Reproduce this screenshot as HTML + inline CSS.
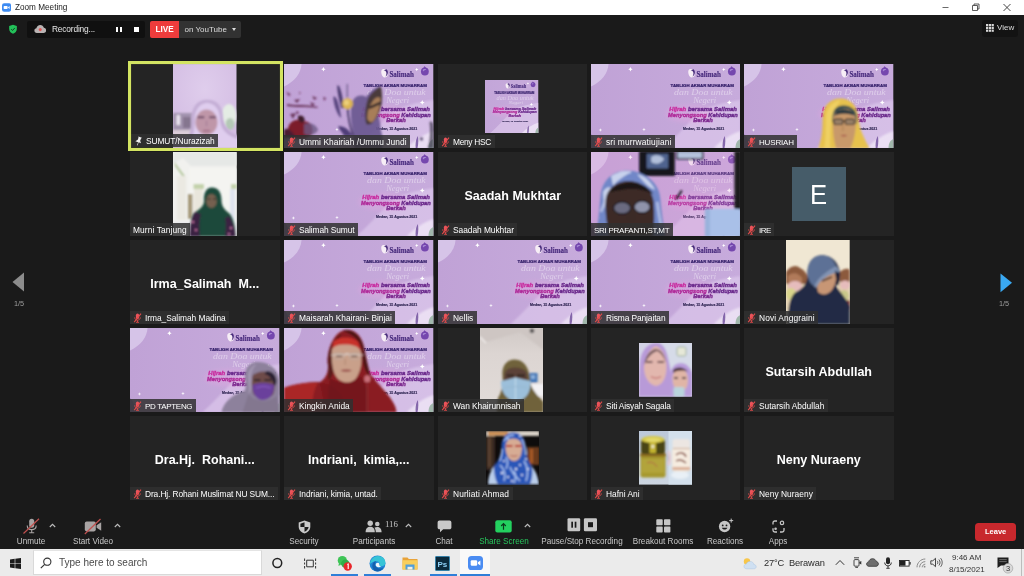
<!DOCTYPE html>
<html><head><meta charset="utf-8"><title>Zoom Meeting</title>
<style>
*{margin:0;padding:0;box-sizing:border-box}
html,body{width:1024px;height:576px;overflow:hidden;background:#1a1a1a;font-family:"Liberation Sans",sans-serif;}
.abs{position:absolute}
.lab,.big,.tb,.txt,#titlebar .t,#taskbar div,div.abs{will-change:transform}
#titlebar{position:absolute;left:0;top:0;width:1024px;height:15.4px;background:#fff}
#titlebar .t{position:absolute;left:15px;top:2px;font-size:8.2px;color:#222;line-height:11px;white-space:nowrap}
.tile{position:absolute;width:149.5px;height:84.4px;background:#242424;overflow:hidden}
.tile svg.full{position:absolute;left:0;top:0;width:100%;height:100%}
.lab{position:absolute;left:0;bottom:0;height:13.1px;background:rgba(48,48,48,.85);color:#fff;font-size:8.4px;line-height:13.1px;white-space:nowrap;padding:1px 3.5px 0 15px;letter-spacing:-.29px}
.lab.nomic{padding-left:3px}
.lab svg{position:absolute;left:2.5px;top:2px;width:9px;height:10px}
.big{position:absolute;left:0;top:0;width:100%;height:100%;display:flex;align-items:center;justify-content:center;color:#fff;font-weight:700;font-size:12.5px;white-space:pre;padding-top:2.8px}
.tb{position:absolute;color:#c8c8c8;font-size:8.15px;line-height:10px;white-space:nowrap;transform:translateX(-50%);top:536.5px}
#taskbar{position:absolute;left:0;top:549px;width:1024px;height:27px;background:#ebebeb}
</style></head><body>
<svg width="0" height="0" style="position:absolute">
<defs>
<filter id="b1" x="-10%" y="-10%" width="120%" height="120%"><feGaussianBlur stdDeviation="0.8"/></filter>
<filter id="b2" x="-10%" y="-10%" width="120%" height="120%"><feGaussianBlur stdDeviation="1.2"/></filter>
<filter id="b3" x="-20%" y="-20%" width="140%" height="140%"><feGaussianBlur stdDeviation="2.2"/></filter>
<filter id="bt" x="-5%" y="-20%" width="110%" height="140%"><feGaussianBlur stdDeviation="0.35"/></filter>
<linearGradient id="slbg" x1="0" y1="0" x2="1" y2="0"><stop offset="0" stop-color="#c0a2d6"/><stop offset="1" stop-color="#c7abdc"/></linearGradient>
<path id="star" d="M0-2.2 Q0.25-0.25 2.2 0 Q0.25 0.25 0 2.2 Q-0.25 0.25-2.2 0 Q-0.25-0.25 0-2.2Z" fill="#fff"/>
<symbol id="slide" viewBox="0 0 149 84.5" preserveAspectRatio="none">
  <rect width="149" height="84.5" fill="url(#slbg)"/>
  <path d="M0 0H17.5C17 9 11 17.5 0 22.5Z" fill="#d6c4e8"/>
  <path d="M72 84.500C84 74 94 62 104 52C112 44 124 40 149 36V84.500Z" fill="#dfccee" opacity=".62" filter="url(#b2)"/>
  <ellipse cx="100" cy="50" rx="26" ry="9" fill="#e9a6e2" opacity=".33" filter="url(#b3)"/>
  <path d="M122 84.500C130 76 140 70 149 67V84.500Z" fill="#f1e9f7" opacity=".75" filter="url(#b1)"/>
  <path d="M131.300 84.500C130.800 79 131.600 75 133.300 72C134.300 76 133.800 81 133 84.500Z" fill="#6b4a98" opacity=".8"/>
  <path d="M144 84.500C144 79 146 76 149 75V84.500Z" fill="#8fae9a" opacity=".8" filter="url(#bt)"/>
  <path d="M0 84.500V70C3 72 5 78 6 84.500Z" fill="#8d6bb8" opacity=".6"/>
  <g filter="url(#bt)" transform="translate(-1.2 0)">
  <use href="#star" transform="translate(40.5 5.2) scale(1)"/>
  <use href="#star" transform="translate(133.5 5.5) scale(.8)"/>
  <use href="#star" transform="translate(139 38.5) scale(1.1)"/>
  <use href="#star" transform="translate(10.6 66) scale(.8)" opacity=".85"/>
  <use href="#star" transform="translate(54 65.5) scale(.8)" opacity=".85"/>
  <ellipse cx="101.300" cy="9.200" rx="3" ry="4.300" fill="#f7eef6" transform="rotate(-15 101.300 9.200)"/>
  <path d="M100.500 6.200C103.500 6.600 104.200 10 102.200 12.600C104.800 11.400 105.800 7.400 103.400 5.200Z" fill="#4a2d7c"/>
  <text x="106.300" y="13" font-family="Liberation Serif" font-weight="700" font-size="8.600" fill="#45287a" stroke="#45287a" stroke-width=".15" textLength="24.500" lengthAdjust="spacingAndGlyphs">Salimah</text>
  <circle cx="141.600" cy="7.500" r="3.900" fill="#7446ae"/>
  <path d="M141 2.200C142.300 3 143 3.800 143 4.800L140.200 4.800C140.200 3.800 140.500 3 141 2.200Z" fill="#7446ae"/>
  <path d="M139.300 6C140.500 4.600 142.500 4.800 143.200 6.200C142 5.800 140.800 6.200 140.300 7.600Z" fill="#a98ad6"/>
  <text x="80.500" y="22.600" font-family="Liberation Sans" font-weight="700" font-size="4.200" fill="#35206a" stroke="#35206a" stroke-width=".22" textLength="63" lengthAdjust="spacingAndGlyphs">TABLIGH AKBAR MUHARRAM</text>
  <text x="84" y="30.800" font-family="Liberation Serif" font-style="italic" font-size="8" fill="#fff" opacity=".42" textLength="58.500" lengthAdjust="spacingAndGlyphs">dan Doa untuk</text>
  <text x="103" y="38.600" font-family="Liberation Serif" font-style="italic" font-size="7.500" fill="#fff" opacity=".42" textLength="23" lengthAdjust="spacingAndGlyphs">Negeri</text>
  <text x="79.300" y="47.300" font-family="Liberation Sans" font-weight="700" font-style="italic" font-size="5.500" stroke-width=".38" textLength="67.300" lengthAdjust="spacingAndGlyphs"><tspan fill="#c82ea0" stroke="#c82ea0">Hijrah</tspan><tspan fill="#6b2a8c" stroke="#6b2a8c"> bersama Salimah</tspan></text>
  <text x="78" y="52.600" font-family="Liberation Sans" font-weight="700" font-style="italic" font-size="5.500" stroke-width=".38" textLength="69.500" lengthAdjust="spacingAndGlyphs"><tspan fill="#b02c9a" stroke="#b02c9a">Menyongsong</tspan><tspan fill="#6b2a8c" stroke="#6b2a8c"> Kehidupan</tspan></text>
  <text x="103" y="58" font-family="Liberation Sans" font-weight="700" font-style="italic" font-size="5.500" fill="#7d2a8f" stroke="#7d2a8f" stroke-width=".38" textLength="19.600" lengthAdjust="spacingAndGlyphs">Berkah</text>
  <text x="93" y="66.300" font-family="Liberation Sans" font-weight="700" font-size="3" fill="#2d2350" stroke="#2d2350" stroke-width=".12" textLength="41" lengthAdjust="spacingAndGlyphs">Medan, 15 Agustus 2021</text>
  </g>
</symbol>
<symbol id="mic" viewBox="0 0 9 10">
  <rect x="2.900" y="0.600" width="3.200" height="5.400" rx="1.600" fill="#ea545c"/>
  <path d="M1.7 4.4C1.7 8 7.3 8 7.3 4.4" fill="none" stroke="#e24a4a" stroke-width=".9"/>
  <path d="M4.5 7.2V9M3 9.3H6" stroke="#e24a4a" stroke-width=".9" fill="none"/>
  <path d="M1.2 9.2L8 0.6" stroke="#e24a4a" stroke-width="1.1"/>
</symbol>
</defs></svg>
<div id="titlebar">
  <svg class="abs" style="left:1.800px;top:2.700px" width="9.200" height="9" viewBox="0 0 10 9"><rect width="10" height="9" rx="2.4" fill="#3d8bf2"/><rect x="1.8" y="2.8" width="4.3" height="3.4" rx=".8" fill="#fff"/><path d="M6.6 4.1L8.3 3V6L6.6 4.9Z" fill="#fff"/></svg>
  <div class="t">Zoom Meeting</div>
  <svg class="abs" style="left:940px;top:0" width="80" height="15" viewBox="0 0 80 15"><path d="M2.5 7.5H8.5" stroke="#444" stroke-width=".8"/><path d="M32.5 5.5H37.5V10.5H32.5Z M34 5.5V4H39V9H37.5" fill="none" stroke="#333" stroke-width=".8"/><path d="M63.5 4L70.5 11M70.5 4L63.5 11" stroke="#333" stroke-width=".9"/></svg>
</div>
<!-- top controls -->
<svg class="abs" style="left:8.300px;top:23.800px" width="10" height="10.400" viewBox="0 0 12 12"><path d="M6 .6L10.6 2.3V5.8C10.6 8.6 8.6 10.6 6 11.5C3.400 10.600 1.400 8.600 1.400 5.800V2.300Z" fill="#23c25a"/><path d="M3.900 6L5.400 7.500L8.200 4.500" fill="none" stroke="#13351f" stroke-width="1.1"/></svg>
<div class="abs" style="left:27px;top:20.900px;width:118px;height:17px;background:#101010;border-radius:2px"></div>
<svg class="abs" style="left:33.800px;top:23.700px" width="12.500" height="9.800" viewBox="0 0 14 11"><path d="M3.200 10C1.400 10 .4 8.800 .4 7.400C.4 6 1.400 5 2.700 4.900C3 2.600 4.800 1 7 1C9 1 10.600 2.300 11.100 4.200C12.600 4.400 13.600 5.600 13.600 7.100C13.600 8.700 12.400 10 10.800 10Z" fill="#b9b3b3"/><circle cx="7" cy="6.300" r="1.700" fill="#e05555"/></svg>
<div class="abs" style="left:52.300px;top:23.800px;font-size:8.400px;line-height:10px;color:#e6e6e6;white-space:nowrap;letter-spacing:-.18px">Recording...</div>
<div class="abs" style="left:116px;top:26.500px;width:2px;height:5.400px;background:#fff"></div>
<div class="abs" style="left:119.800px;top:26.500px;width:2px;height:5.400px;background:#fff"></div>
<div class="abs" style="left:134.200px;top:26.600px;width:5.400px;height:5.400px;background:#fff"></div>
<div class="abs" style="left:150px;top:21.100px;width:29px;height:16.900px;background:#ee3c3c;color:#fff;font-weight:700;font-size:8.200px;line-height:17px;text-align:center;border-radius:2px 0 0 2px">LIVE</div>
<div class="abs" style="left:179px;top:21.100px;width:62px;height:16.900px;background:#323232;color:#dcdcdc;font-size:8px;line-height:17px;padding-left:5.500px;border-radius:0 2px 2px 0;white-space:nowrap">on YouTube<span style="position:absolute;left:53px;top:7.300px;border:2px solid transparent;border-top:3px solid #ddd;width:0;height:0"></span></div>
<div class="abs" style="left:982px;top:20px;width:36px;height:16.500px;background:#131313;border-radius:3px"></div>
<svg class="abs" style="left:986px;top:24px" width="8" height="8" viewBox="0 0 8 8"><g fill="#d8d8d8"><rect x="0" y="0" width="2.200" height="2.200"/><rect x="2.800" y="0" width="2.200" height="2.200"/><rect x="5.600" y="0" width="2.200" height="2.200"/><rect x="0" y="2.800" width="2.200" height="2.200"/><rect x="2.800" y="2.800" width="2.200" height="2.200"/><rect x="5.600" y="2.800" width="2.200" height="2.200"/><rect x="0" y="5.600" width="2.200" height="2.200"/><rect x="2.800" y="5.600" width="2.200" height="2.200"/><rect x="5.600" y="5.600" width="2.200" height="2.200"/></g></svg>
<div class="abs" style="left:997px;top:23px;font-size:8px;line-height:10px;color:#dedede">View</div>
<!-- nav arrows -->
<svg class="abs" style="left:12px;top:272px" width="13" height="20" viewBox="0 0 13 20"><path d="M0.500 10L12 .5V19.500Z" fill="#8c8c8c"/></svg>
<div class="abs" style="left:13.500px;top:299px;font-size:7.300px;line-height:9px;color:#9c9c9c">1/5</div>
<svg class="abs" style="left:999.500px;top:272.500px" width="13" height="20" viewBox="0 0 13 20"><path d="M12 9.800L0.500 .5V19.200Z" fill="#3aa9f2"/></svg>
<div class="abs" style="left:998.500px;top:299px;font-size:7.300px;line-height:9px;color:#9c9c9c">1/5</div>
<div class="tile" style="left:130.4px;top:63.7px"><svg class="abs" style="left:43px;top:0" width="63.500" height="84.400" viewBox="0 0 63.500 84.400"><defs><radialGradient id="gsu" cx=".5" cy=".3" r=".75"><stop offset="0" stop-color="#dfcdec"/><stop offset="1" stop-color="#d2bbe2"/></radialGradient></defs><rect width="63.500" height="84.400" fill="url(#gsu)"/><g filter="url(#b2)"><rect x="0" y="49" width="21" height="18" fill="#a293ae"/><rect x="3.500" y="51" width="3.500" height="10" fill="#ece6f0"/><rect x="10" y="53" width="8" height="11" fill="#85768f"/><rect x="0" y="66" width="24" height="6" fill="#dccdd8"/><ellipse cx="56" cy="52" rx="7.500" ry="12" fill="#e4ece4"/><ellipse cx="57" cy="60" rx="4.500" ry="6" fill="#b4c8b6"/></g><g filter="url(#b1)" transform="translate(33.500 88.400) scale(1.120) translate(-33.500 -84.400)"><path d="M34 37.500C23 37.500 19.500 47 20 57C20 65 17 73 13 84.400H63.500V70C55 68 48.500 62 48 52C47.500 43 43 37.500 34 37.500Z" fill="#dfcdee"/><path d="M34 37.500C23 37.500 19.500 47 20 57C20 65 17 73 13 84.400H16C20 74 23 66 23 57C22.500 48 26 41 34 40C42 41 45.500 47 45.500 55C46 64 52 70 63.500 73V70C55 68 48.500 62 48 52C47.500 43 43 37.500 34 37.500Z" fill="#b9a3cc" opacity=".7"/><ellipse cx="33.500" cy="57.500" rx="9.800" ry="11.500" fill="#bf96a8"/><path d="M25.500 53H31.500M36 53H42" stroke="#6a4a66" stroke-width="1.800"/><path d="M30.500 65H36.500" stroke="#9c6480" stroke-width="1.300"/><path d="M33.500 56V61" stroke="#a8809a" stroke-width="1.200"/></g></svg><div class="lab" style="left:0.5px;bottom:0.5px;font-size:8.4px;letter-spacing:-0.08px"><svg viewBox="0 0 9 10"><path d="M2.800 .8H6.600L6 2V4.200L7.600 6.200H5.100V9.300L4.500 9.800V6.200H1.600L3.400 4.200V2Z" fill="#f0f0f0" transform="rotate(20 4.500 5)"/></svg><span>SUMUT/Nurazizah</span></div></div>
<div class="tile" style="left:284px;top:63.7px"><svg class="full" viewBox="0 0 149 84.5" preserveAspectRatio="none"><use href="#slide"/><g filter="url(#b1)"><path d="M2 28C6 29 8 31 5 32ZM10 36L16 35L13 39ZM28 32L33 34L30 36ZM39 33L42 34L40 37ZM15 28L17 29L15 30ZM26 38L31 40L28 42ZM3 40C12 42 22 40 34 43L33 44C22 42 12 44 3 42ZM6 50L12 49L9 55ZM12 47L15 48L13 51Z" fill="#5c2348" opacity=".85"/><path d="M4 64C6 56 14 54 19 58C25 56 30 62 28 70C24 76 8 76 4 72Z" fill="#7b1d2c"/><path d="M14 52C18 50 22 54 20 58C17 60 13 57 14 52Z" fill="#3d1a2c"/><path d="M0 66C4 62 10 70 12 74H0Z" fill="#4a1f33"/><path d="M20 60C26 58 32 60 34 66C30 72 24 72 20 70Z" fill="#6d5a86" opacity=".8"/><path d="M49 33C52 30 55 40 57 54C54 52 50 44 49 33Z" fill="#5a4680"/><path d="M53 22C55 18 58 30 60 44L57 44C55 36 53 28 53 22Z" fill="#4b3a70"/><path d="M54 62C60 62 66 66 68 72H60C58 68 55 66 54 62Z" fill="#4f3d78"/><path d="M67 42C68 34 74 29 82 33C85 28 90 24 96 22C99 30 98 42 94 50C96 58 96 66 98 72L98 84.500H70C70 76 68 66 67 58C66.500 52 66.500 46 67 42Z" fill="#6a5890" opacity=".92"/><path d="M84 34C88 28 93 24 96.500 22.500C99 32 98 44 93 52C90 58 86 62 82 60C80 52 81 42 84 34Z" fill="#4a3a3a"/><path d="M88 38C90 34 94 32 96 34C96 42 94 50 90 56C87 60 84 58 83 54C83 48 85 42 88 38Z" fill="#a87e58"/><path d="M85 44L96 39" stroke="#2a2228" stroke-width="2.400"/><path d="M63 20V34" stroke="#3e3060" stroke-width=".8"/><path d="M63.500 45C64 54 66 64 69 72" stroke="#3e3060" stroke-width="1.600" fill="none"/><circle cx="63.300" cy="39.700" r="5.400" fill="#dcb552"/><circle cx="62.300" cy="38.700" r="2.600" fill="#ecd07c"/><circle cx="137" cy="75" r="1.600" fill="#5a4a70"/><path d="M145 58C148 56 149 60 149 64V84.500H143C146 78 146 66 145 58Z" fill="#4a4258" opacity=".8"/></g></svg><div class="lab" style="font-size:8.4px;letter-spacing:0.04px"><svg viewBox="0 0 9 10"><use href="#mic"/></svg><span>Ummi Khairiah /Ummu Jundi</span></div></div>
<div class="tile" style="left:437.5px;top:63.7px"><svg class="abs" style="left:47.700px;top:16px" width="53.500" height="53.500" viewBox="64.500 0 84.500 84.500" preserveAspectRatio="none"><use href="#slide" width="149" height="84.500"/></svg><div class="lab" style="font-size:8.4px;letter-spacing:-0.31px"><svg viewBox="0 0 9 10"><use href="#mic"/></svg><span>Meny HSC</span></div></div>
<div class="tile" style="left:590.9px;top:63.7px"><svg class="full" viewBox="0 0 149 84.5" preserveAspectRatio="none"><use href="#slide"/></svg><div class="lab" style="font-size:8.4px;letter-spacing:0.15px"><svg viewBox="0 0 9 10"><use href="#mic"/></svg><span>sri murrwatiujiani</span></div></div>
<div class="tile" style="left:744.3px;top:63.7px"><svg class="full" viewBox="0 0 149 84.5" preserveAspectRatio="none"><use href="#slide"/><g filter="url(#b1)"><path d="M96 34.500C86 34.500 79 42 78.500 52C78 62 79 70 74 84.500H125C121 76 116 68 114.500 58C114 44 108 34.500 96 34.500Z" fill="#e6c14d"/><path d="M96 36C90 37 84 42 82 50C81 60 82 72 80 84.500H86C86 70 86 56 90 46C92 42 95 39 96 36Z" fill="#f0d36a" opacity=".8"/><path d="M90 46C94 40 104 40 110 46C113 50 113 56 112 60L88 58C88 54 88 50 90 46Z" fill="#2b4850"/><path d="M88.500 56C88.500 48 94 44.500 100 44.500C107 44.500 111.500 49 111.500 57C111.500 66 110 76 106 84.500H92C89 76 88.500 66 88.500 56Z" fill="#c8996b"/><path d="M92 47C96 44.500 104 44.500 109 48L110 52C104 49 96 49 90 52Z" fill="#2a3a40"/><rect x="89.500" y="55" width="9" height="5.600" rx="1.500" fill="#9a8068" stroke="#2c2622" stroke-width="1"/><rect x="101" y="55" width="9" height="5.600" rx="1.500" fill="#9a8068" stroke="#2c2622" stroke-width="1"/><path d="M98.500 57H101" stroke="#2c2622" stroke-width="1"/><path d="M96 71.500C98 70.500 101 70.500 103 71.500C101 73 98 73 96 71.500Z" fill="#a85a4e"/><path d="M98.500 62V67" stroke="#b08258" stroke-width="1.200"/></g></svg><div class="lab" style="font-size:8.0px;letter-spacing:-0.17px"><svg viewBox="0 0 9 10"><use href="#mic"/></svg><span>HUSRIAH</span></div></div>
<div class="tile" style="left:130.4px;top:151.8px"><svg class="abs" style="left:42.800px;top:0" width="63.700" height="84.400" viewBox="0 0 63.700 84.400"><rect width="63.700" height="84.400" fill="#f1f1ee"/><g filter="url(#b1)"><path d="M0 0H63.700V14H18L10 6L0 12Z" fill="#e6e8e6"/><path d="M16 16H63.700V70H16Z" fill="#f4f4f1"/><path d="M1.500 10L12 24V28L2 14Z" fill="#b8c9a2"/><rect x="4" y="24" width="9" height="44" fill="#ebe9e2"/><rect x="20.500" y="32" width="10.500" height="5" fill="#c3d2ab"/><rect x="58" y="32" width="5.700" height="5" fill="#c3d2ab"/><rect x="21" y="37" width="9" height="30" fill="#e9e6dc"/><rect x="15" y="42" width="4.500" height="25" fill="#a59878"/><rect x="57" y="37" width="5" height="32" fill="#dfe3ee"/><rect x="0" y="70" width="63.700" height="14.400" fill="#e9e9ec"/></g><g filter="url(#b1)"><path d="M39 35.500C32 35.500 30.500 43 31 49C31 55 25 58 20 62C17 70 17 78 17 84.400H62.500C62.500 76 61 68 57 62C52 58 48.500 55 48.500 48C48.500 41 45.500 35.500 39 35.500Z" fill="#1f4a3b"/><path d="M22 60C18 66 17 76 16.500 84.400H27C26 76 26 68 28 62Z" fill="#3a2443"/><path d="M56 64C60 70 62 78 62.500 84.400H52C53 76 53 70 52 66Z" fill="#3a2443"/><circle cx="20" cy="70" r="1.100" fill="#d77bb0"/><circle cx="23" cy="78" r="1.100" fill="#d77bb0"/><circle cx="58" cy="76" r="1.100" fill="#d77bb0"/><circle cx="56" cy="82" r="1" fill="#d77bb0"/><ellipse cx="38.500" cy="49" rx="5.300" ry="7" fill="#75604f"/><path d="M34.500 47H37.500M40 47H43" stroke="#2e2420" stroke-width="1.200"/></g></svg><div class="lab nomic" style="font-size:8.4px;letter-spacing:0.10px"><span>Murni Tanjung</span></div></div>
<div class="tile" style="left:284px;top:151.8px"><svg class="full" viewBox="0 0 149 84.5" preserveAspectRatio="none"><use href="#slide"/></svg><div class="lab" style="font-size:8.4px;letter-spacing:-0.10px"><svg viewBox="0 0 9 10"><use href="#mic"/></svg><span>Salimah Sumut</span></div></div>
<div class="tile" style="left:437.5px;top:151.8px"><div class="big">Saadah Mukhtar</div><div class="lab" style="font-size:8.4px;letter-spacing:-0.04px"><svg viewBox="0 0 9 10"><use href="#mic"/></svg><span>Saadah Mukhtar</span></div></div>
<div class="tile" style="left:590.9px;top:151.8px"><svg class="full" viewBox="0 0 149 84.500" preserveAspectRatio="none"><use href="#slide"/><rect width="149" height="84.500" fill="#e59ad6" opacity=".22"/><g filter="url(#b1)"><rect x="48" y="-1" width="35.500" height="25" fill="#14141c"/><rect x="55.500" y="2" width="21.500" height="14.500" fill="#50648f"/><path d="M60 5C64 2 70 3 73 7C70 12 64 13 60 10Z" fill="#c9d6ec" opacity=".8"/><rect x="85" y="-1" width="27" height="8.500" fill="#1c2030"/><rect x="86.500" y="0" width="24" height="6" fill="#b4c2dc"/><path d="M36 18.500C22 18.500 11 28 9.500 44C8 58 8 70 4 84.500H74C72 72 70 58 69 46C68 30 52 18.500 36 18.500Z" fill="#7187c8"/><path d="M20 24C26 20 34 19 40 20C34 24 26 28 22 34ZM46 22C54 24 60 30 64 38C58 36 52 30 46 22ZM12 40C14 36 18 34 20 36C16 42 14 50 13 58Z" fill="#d2daf0" opacity=".9"/><path d="M10 60C12 54 14 50 15 46M66 50C67 58 68 66 70 74M28 21C32 19.500 36 19.500 40 20.500" stroke="#c9d2ee" stroke-width="2.200" fill="none" opacity=".8"/><path d="M38 29C26 29 15 36 14.500 50C14 62 16 72 18 84.500H62C63 72 63.500 62 62.500 50C61.500 38 50 29 38 29Z" fill="#3d2b27"/><path d="M18 40C24 32 36 30 44 31C52 32 58 36 62 42C54 38 44 36 36 37C28 38 22 40 18 40Z" fill="#1c1516"/><ellipse cx="31" cy="56" rx="8.500" ry="6" fill="#6a6a80" stroke="#15131a" stroke-width="1.200"/><ellipse cx="51" cy="55" rx="8" ry="6" fill="#8f93aa" stroke="#15131a" stroke-width="1.200"/><path d="M36 62C38 58 42 58 44 62C46 66 44 70 40 70C36 70 34 66 36 62Z" fill="#3a2a28"/><path d="M90.500 38.500L85 47" stroke="#1a1420" stroke-width="2"/><rect x="143" y="-1" width="7" height="86" fill="#1b1b1b"/><rect x="113.500" y="57" width="36" height="28" rx="2" fill="#a9c0e8"/><rect x="113.500" y="57" width="5" height="28" fill="#9ab2dc"/></g></svg><div class="lab nomic" style="font-size:8.0px;letter-spacing:-0.26px"><span>SRI PRAFANTI,ST,MT</span></div></div>
<div class="tile" style="left:744.3px;top:151.8px"><div class="abs" style="left:47.500px;top:15.500px;width:53.500px;height:53.500px;background:#465c69;color:#fff;font-size:28.500px;line-height:55.400px;text-align:center"><span style="display:inline-block;transform:scaleX(.9)">E</span></div><div class="lab" style="font-size:8.0px;letter-spacing:-0.54px"><svg viewBox="0 0 9 10"><use href="#mic"/></svg><span>IRE</span></div></div>
<div class="tile" style="left:130.4px;top:239.9px"><div class="big">Irma_Salimah  M...</div><div class="lab" style="font-size:8.4px;letter-spacing:-0.04px"><svg viewBox="0 0 9 10"><use href="#mic"/></svg><span>Irma_Salimah Madina</span></div></div>
<div class="tile" style="left:284px;top:239.9px"><svg class="full" viewBox="0 0 149 84.5" preserveAspectRatio="none"><use href="#slide"/></svg><div class="lab" style="font-size:8.4px;letter-spacing:-0.01px"><svg viewBox="0 0 9 10"><use href="#mic"/></svg><span>Maisarah Khairani- Binjai</span></div></div>
<div class="tile" style="left:437.5px;top:239.9px"><svg class="full" viewBox="0 0 149 84.5" preserveAspectRatio="none"><use href="#slide"/></svg><div class="lab" style="font-size:8.4px;letter-spacing:-0.06px"><svg viewBox="0 0 9 10"><use href="#mic"/></svg><span>Nellis</span></div></div>
<div class="tile" style="left:590.9px;top:239.9px"><svg class="full" viewBox="0 0 149 84.5" preserveAspectRatio="none"><use href="#slide"/></svg><div class="lab" style="font-size:8.4px;letter-spacing:-0.10px"><svg viewBox="0 0 9 10"><use href="#mic"/></svg><span>Risma Panjaitan</span></div></div>
<div class="tile" style="left:744.3px;top:239.9px"><svg class="abs" style="left:42.100px;top:0" width="63.700" height="84.400" viewBox="0 0 63.700 84.400"><rect width="63.700" height="84.400" fill="#f0e7d3"/><g filter="url(#b1)"><path d="M0 32C4 26 10 24 14 28C18 30 22 34 22 40V46H0Z" fill="#8c5a3c"/><path d="M2 36C6 32 12 32 16 38V44H2Z" fill="#b07a5a"/><path d="M54 32C58 28 62 28 63.700 30V46H54Z" fill="#8c5a3c"/><rect x="0" y="44" width="22" height="26" fill="#e2cfae"/><ellipse cx="9" cy="46" rx="7" ry="5" fill="#e6bcbc"/><ellipse cx="5" cy="54" rx="5" ry="6" fill="#d8d48a"/><rect x="52" y="42" width="11.700" height="28" fill="#e2cfae"/><ellipse cx="59" cy="45" rx="5" ry="4.500" fill="#e6bcbc"/><ellipse cx="58" cy="56" rx="5" ry="6" fill="#c9c88a"/><path d="M56 62C60 62 63 66 63.700 72V60Z" fill="#7a3030"/><path d="M36 15.300C26 15.300 21 24 21.500 34C22 42 18 48 10 52C4 56 2 66 2 84.400H63.700V66C60 58 54 52 50 46C54 40 56 34 52 26C49 19 43 15.300 36 15.300Z" fill="#232b45"/><path d="M36 15.300C27 15.300 21.500 23 21.500 32C21.500 38 24 44 28 46C30 40 38 32 50 26C47 19 43 15.300 36 15.300Z" fill="#5d7196"/><path d="M28 46C30 40 38 32 50 26C52 28 53 30 53 32C42 36 34 42 30 48Z" fill="#8093b4"/><path d="M31 47C33 41 40 36 49 33C51 38 50 44 46 50C42 55 36 56 32 52Z" fill="#c79674"/><path d="M36 41L46 37" stroke="#3a2a2a" stroke-width="1.400"/><path d="M49 30C54 34 55 40 52 46C50 44 50 36 49 30Z" fill="#1a1f33"/></g></svg><div class="lab" style="font-size:8.4px;letter-spacing:0.13px"><svg viewBox="0 0 9 10"><use href="#mic"/></svg><span>Novi Anggraini</span></div></div>
<div class="tile" style="left:130.4px;top:327.9px"><svg class="full" viewBox="0 0 149 84.5" preserveAspectRatio="none"><use href="#slide"/><g filter="url(#b1)"><path d="M127 34C118 34 114 42 114.500 50C115 56 116 60 114 63C104 66 94 72 91 84.500H149V52C147 40 138 34 127 34Z" fill="#8d819c"/><path d="M127 36C121 37 117 43 117.500 50C118 56 119 62 118 66C122 64 122 56 121 50C120.500 44 123 39 127 36Z" fill="#a79bb6" opacity=".8"/><path d="M122 48C126 43 136 42 143 46C145 52 145 60 143 66C138 72 128 72 123 66C121 60 121 54 122 48Z" fill="#6e4c4a"/><path d="M136 43C141 43 145 46 146 52C146 56 145 58 144 58C142 52 140 48 134 46Z" fill="#2a2030"/><path d="M123.500 52H130M134 52H141" stroke="#1f1820" stroke-width="1.600"/><path d="M122 57C128 54.500 137 54.500 143.500 57C144 64 141 71 133 72C126 72 122 66 122 57Z" fill="#6b3f9c"/><path d="M126 60C130 58.500 136 58.500 140 60" stroke="#8a5fc0" stroke-width="1" fill="none"/><path d="M118 66C124 74 138 76 146 68L149 84.500H112Z" fill="#83778f"/></g></svg><div class="lab" style="font-size:8.0px;letter-spacing:-0.31px"><svg viewBox="0 0 9 10"><use href="#mic"/></svg><span>PD TAPTENG</span></div></div>
<div class="tile" style="left:284px;top:327.9px"><svg class="full" viewBox="0 0 149 84.5" preserveAspectRatio="none"><use href="#slide"/><g filter="url(#b1)"><path d="M0 60C10 56 24 54 36 54C42 50 44 44 44 38C42 24 48 6 60 2C70 0 78 8 80 20C82 30 84 40 86 46C92 54 100 62 106 70C110 76 112 80 112 84.500H0Z" fill="#8a1c22"/><path d="M0 60C10 56 24 54 34 55C30 60 28 70 28 84.500H0Z" fill="#aa2727"/><path d="M36 56C44 54 50 60 56 66C60 72 62 78 62 84.500H40C40 74 38 64 36 56Z" fill="#7d171c"/><path d="M46 50C52 56 70 56 76 48C80 54 84 62 84 72V84.500H44C44 72 44 60 46 50Z" fill="#6e1519" opacity=".75"/><path d="M58 3C66 0 76 6 79 18C81 28 84 40 86 48C80 44 78 34 78 24C77 14 70 6 58 3Z" fill="#4a1518"/><path d="M44 38C42 28 46 12 58 5C52 14 50 26 50 36C50 44 48 50 44 52Z" fill="#5a1a1c"/><path d="M49 14C54 8 68 8 74 14L76 22H48Z" fill="#c8302c"/><path d="M47.500 24C47.500 18 54 16.500 61 16.500C70 16.500 76.500 19 77 26C78 36 76 44 72 50C68 56 58 56 53 50C48 44 47.500 34 47.500 24Z" fill="#c9a08a"/><path d="M47 27H60C62 25.500 64 25.500 66 27H79" stroke="#ddd6d2" stroke-width="1.100" fill="none"/><rect x="49" y="25.500" width="11" height="5.500" rx="2" fill="none" stroke="#b9aaa4" stroke-width=".8"/><rect x="65" y="25.500" width="11" height="5.500" rx="2" fill="none" stroke="#b9aaa4" stroke-width=".8"/><path d="M52 28.500H58M67 28.500H73" stroke="#4a3430" stroke-width="1.200"/><path d="M56 42.500C60 41 64 41 68 42.500C64 44.500 60 44.500 56 42.500Z" fill="#a05a54"/><path d="M61 31V37" stroke="#b48a74" stroke-width="1.200"/><ellipse cx="83" cy="51" rx="3" ry="3.600" fill="#c8707a"/><path d="M83 54V84.500" stroke="#8a2a30" stroke-width="1.600"/></g></svg><div class="lab" style="font-size:8.4px;letter-spacing:0.00px"><svg viewBox="0 0 9 10"><use href="#mic"/></svg><span>Kingkin Anida</span></div></div>
<div class="tile" style="left:437.5px;top:327.9px"><svg class="abs" style="left:42.400px;top:0" width="63.600" height="84.400" viewBox="0 0 63.600 84.400"><defs><linearGradient id="gwan" x1="0" y1="0" x2="0" y2="1"><stop offset="0" stop-color="#d0c9c6"/><stop offset=".3" stop-color="#dcd5d2"/><stop offset="1" stop-color="#e2dcd9"/></linearGradient></defs><rect width="63.600" height="84.400" fill="url(#gwan)"/><g filter="url(#b1)"><path d="M0 8L6 14L40 4L63.600 22V0H0Z" fill="#cec6c3"/><path d="M0 9L6 15" stroke="#f2eeec" stroke-width="1.500"/><circle cx="52" cy="2.800" r="2.400" fill="#5a5656"/><rect x="49.500" y="45" width="8" height="9.500" fill="#3d72b4"/><rect x="51" y="47" width="4" height="4" fill="#8ab0dc"/><rect x="51" y="56" width="12.600" height="12" fill="#f3f1f4"/><path d="M34.800 31.500C26 31.500 21.500 39 22.500 48C23 56 22 64 18 70C17 76 17 80 17 84.400H63.600V74C58 68 52 62 50 54C50 40 44 31.500 34.800 31.500Z" fill="#70623a"/><path d="M25 44C28 38 42 38 46.500 44C48 48 48 52 47 55H24.500C24 52 24 48 25 44Z" fill="#5c4238"/><path d="M26.500 47.500H34M37 47.500H45" stroke="#2e2220" stroke-width="1.800"/><path d="M21 53C26 52 30 51 35.500 49.500C41 51 46 52 50.500 53C51 62 48 72 36 73.500C25 72 20.500 62 21 53Z" fill="#9cbfda"/><path d="M35.500 49.500V73" stroke="#c4dcec" stroke-width="1"/><path d="M24 60C30 58 42 58 48 60" stroke="#93b6cf" stroke-width=".8" fill="none"/></g></svg><div class="lab" style="font-size:8.4px;letter-spacing:-0.04px"><svg viewBox="0 0 9 10"><use href="#mic"/></svg><span>Wan Khairunnisah</span></div></div>
<div class="tile" style="left:590.9px;top:327.9px"><svg class="abs" style="left:48.100px;top:15.400px" width="53.200" height="53.600" viewBox="0 0 53.200 53.600"><rect width="53.200" height="53.600" fill="#d3d3e6"/><g filter="url(#b1)"><rect x="22" y="0" width="31.200" height="30" fill="#d6dbe8"/><rect x="38" y="4" width="9" height="9" rx="1.500" fill="#e6e8d8" stroke="#9fb0a0" stroke-width="1"/><path d="M18 0C8 0 2 8 1 20C0 32 0 44 0 53.600H34V40C32 30 30 16 27 8C25 3 22 0 18 0Z" fill="#b89ad8"/><path d="M17 3C10 6 6 14 5 24C5 34 10 42 17 43C24 42 27.500 34 27.500 24C27.500 14 24 6 17 3Z" fill="#e2b7ae"/><path d="M7 19H13.500M18.500 19H25" stroke="#4a3038" stroke-width="1.500"/><path d="M12 33.500C15 35.500 19 35.500 22 33.500" stroke="#c4706e" stroke-width="1.300" fill="none"/><path d="M16 6C10 8 6 14 5 22C8 16 12 10 18 8C22 10 25 14 27 20C26 12 22 6 16 6Z" fill="#4a3440" opacity=".7"/><path d="M42 20C35 20 31 26 31.500 34C32 42 32 48 30 53.600H53.200V30C51 24 47 20 42 20Z" fill="#b99ddb"/><path d="M41 26C36 26 33 31 33.500 37C34 44 37 48 42 48C47 48 49 43 49 37C49 30 46 26 41 26Z" fill="#e0b5a6"/><path d="M35 35H39M43 35H47" stroke="#3a2830" stroke-width="1.400"/><path d="M34 27C38 23 46 24 49 29C45 27 39 27 34 30Z" fill="#4a3038"/><rect x="34.500" y="44" width="11" height="9.600" rx="2" fill="#b9d4dc"/></g></svg><div class="lab" style="font-size:8.4px;letter-spacing:-0.13px"><svg viewBox="0 0 9 10"><use href="#mic"/></svg><span>Siti Aisyah Sagala</span></div></div>
<div class="tile" style="left:744.3px;top:327.9px"><div class="big">Sutarsih Abdullah</div><div class="lab" style="font-size:8.4px;letter-spacing:0.01px"><svg viewBox="0 0 9 10"><use href="#mic"/></svg><span>Sutarsih Abdullah</span></div></div>
<div class="tile" style="left:130.4px;top:416px"><div class="big">Dra.Hj.  Rohani...</div><div class="lab" style="font-size:8.4px;letter-spacing:-0.11px"><svg viewBox="0 0 9 10"><use href="#mic"/></svg><span>Dra.Hj. Rohani Muslimat NU SUM...</span></div></div>
<div class="tile" style="left:284px;top:416px"><div class="big">Indriani,  kimia,...</div><div class="lab" style="font-size:8.4px;letter-spacing:-0.03px"><svg viewBox="0 0 9 10"><use href="#mic"/></svg><span>Indriani, kimia, untad.</span></div></div>
<div class="tile" style="left:437.5px;top:416px"><svg class="abs" style="left:48.100px;top:15.400px" width="53.500" height="53.600" viewBox="0 0 53.500 53.600"><rect width="53.500" height="53.600" fill="#0e0c0c"/><g filter="url(#b1)"><rect x="0" y="0" width="53.500" height="5" fill="#d9d2c8"/><rect x="2" y="0.500" width="20" height="4" fill="#c98a4a"/><rect x="0" y="5" width="9" height="34" fill="#3a2a20"/><rect x="2" y="6" width="3" height="30" fill="#5a4030"/><rect x="41" y="16" width="12.500" height="18" fill="#6a3a1c"/><rect x="44" y="18" width="3" height="14" fill="#a85a28"/><path d="M2 53.600C2 44 6 36 12 32L42 32C48 36 52 44 53 53.600Z" fill="#b9cdea"/><path d="M27 1.500C19 1.500 15.500 8 15.500 16C15.500 24 12 30 8 36C8 44 10 50 12 53.600H44C46 48 47 42 46 36C42 30 39.500 24 39.500 16C39.500 7 35 1.500 27 1.500Z" fill="#2a56b8"/><path d="M14 34C18 38 20 44 18 50M24 36C26 42 30 46 34 50M38 30C42 36 42 44 40 50M20 26C22 30 22 34 20 38M18 10C20 6 24 4 28 4M36 8C38 12 40 18 40 24M16 18C16 22 15 26 14 30M28 40C30 44 30 48 28 52" stroke="#a9c2f0" stroke-width="1.500" fill="none"/><g fill="#dfe8fa"><circle cx="16" cy="42" r="1.200"/><circle cx="22" cy="46" r="1.100"/><circle cx="30" cy="38" r="1.200"/><circle cx="36" cy="44" r="1.100"/><circle cx="42" cy="38" r="1.100"/><circle cx="26" cy="50" r="1.100"/><circle cx="34" cy="34" r="1"/><circle cx="18" cy="30" r="1"/><circle cx="40" cy="28" r="1"/><circle cx="22" cy="8" r="1"/><circle cx="34" cy="5" r="1"/></g><path d="M19.500 16C19.500 10 23 7.500 27.500 7.500C33 7.500 36 11 36 17C36 24 33 30 28 30C22.500 30 19.500 23 19.500 16Z" fill="#d7ac94"/><path d="M20 15H26.500M29 15H35.500" stroke="#b8322a" stroke-width="2"/><path d="M24.500 24.500C26.500 25.500 29.500 25.500 31.500 24.500" stroke="#a85a54" stroke-width="1" fill="none"/></g></svg><div class="lab" style="font-size:8.4px;letter-spacing:0.12px"><svg viewBox="0 0 9 10"><use href="#mic"/></svg><span>Nurliati Ahmad</span></div></div>
<div class="tile" style="left:590.9px;top:416px"><svg class="abs" style="left:48.100px;top:15.400px" width="53.200" height="53.600" viewBox="0 0 53.200 53.600"><defs><linearGradient id="ghaf" x1="0" y1="0" x2="0" y2="1"><stop offset="0" stop-color="#bcc8da"/><stop offset="1" stop-color="#cdd6e2"/></linearGradient></defs><rect width="53.200" height="53.600" fill="url(#ghaf)"/><rect x="29.500" y="0" width="23.700" height="53.600" fill="#d3e0ec"/><g filter="url(#b1)"><path d="M29.500 20C31 24 31 30 29.500 34" stroke="#f0c0c8" stroke-width="2.500" opacity=".7"/><ellipse cx="41" cy="44" rx="9" ry="4" fill="#e9f0f6"/><rect x="1.500" y="23" width="25" height="23.500" rx="2" fill="#a6982e"/><rect x="3" y="28" width="22" height="14" fill="#b2a43a"/><path d="M8 32C12 30 16 32 18 36" stroke="#b0604a" stroke-width="1" fill="none"/><rect x="1" y="22" width="26" height="3.500" rx="1.500" fill="#8a6a20"/><rect x="2" y="8" width="24" height="15" rx="3" fill="#4a4416"/><ellipse cx="14" cy="8.500" rx="11.500" ry="3.600" fill="#d6c742"/><ellipse cx="14" cy="8.800" rx="8" ry="2" fill="#e3d96a"/><rect x="10.500" y="12" width="6.500" height="10" fill="#c2b22e"/><rect x="12.500" y="14" width="2.500" height="3" fill="#f0ecd0"/><rect x="33.500" y="8" width="17.500" height="10" rx="2.500" fill="#ece6e2"/><rect x="33" y="16.500" width="18.500" height="24" rx="3" fill="#f2e6d8"/><rect x="34" y="19" width="16.500" height="18" fill="#f6ece0"/><path d="M37 24C41 20 46 22 47 26M37 30C41 28 45 30 47 32" stroke="#7a3a2a" stroke-width="1.300" fill="none"/><rect x="33.500" y="36" width="17.500" height="3" fill="#c98a6a" opacity=".6"/><path d="M34 17.500H51" stroke="#c9b0a0" stroke-width="1"/></g></svg><div class="lab" style="font-size:8.4px;letter-spacing:0.00px"><svg viewBox="0 0 9 10"><use href="#mic"/></svg><span>Hafni Ani</span></div></div>
<div class="tile" style="left:744.3px;top:416px"><div class="big">Neny Nuraeny</div><div class="lab" style="font-size:8.4px;letter-spacing:0.03px"><svg viewBox="0 0 9 10"><use href="#mic"/></svg><span>Neny Nuraeny</span></div></div>
<div class="abs" style="left:127.700px;top:61.200px;width:155.300px;height:89.800px;border:3.100px solid #d3e462;box-shadow:inset 0 0 1px #9fb23a"></div>
<!-- toolbar -->
<svg class="abs" style="left:22px;top:517px" width="20" height="18" viewBox="0 0 20 18"><rect x="7.200" y="1.800" width="5" height="9" rx="2.500" fill="#a8a3a3"/><path d="M5.200 8.500C5.200 14 14.200 14 14.200 8.500" fill="none" stroke="#a8a3a3" stroke-width="1.100"/><path d="M9.700 13V15.500M7.200 15.800H12.200" stroke="#a8a3a3" stroke-width="1.100"/><path d="M1.500 16.500L17 1.700" stroke="#c0504f" stroke-width="1.200"/></svg>
<svg class="abs" style="left:48.500px;top:523px" width="7" height="5" viewBox="0 0 7 5"><path d="M.8 4L3.500 1.300L6.200 4" fill="none" stroke="#bdbdbd" stroke-width="1.100"/></svg>
<div class="tb" style="left:30.600px">Unmute</div>
<svg class="abs" style="left:82px;top:516.500px" width="22" height="18" viewBox="0 0 22 18"><rect x="2.800" y="4.600" width="11" height="9.800" rx="1.800" fill="#a8a3a3"/><path d="M14.600 8.200L19.200 5.200V13.800L14.600 10.800Z" fill="#a8a3a3"/><path d="M2.800 17L18.500 2" stroke="#c0504f" stroke-width="1.200"/></svg>
<svg class="abs" style="left:113.700px;top:522.600px" width="7" height="5" viewBox="0 0 7 5"><path d="M.8 4L3.500 1.300L6.200 4" fill="none" stroke="#bdbdbd" stroke-width="1.100"/></svg>
<div class="tb" style="left:92.600px">Start Video</div>
<svg class="abs" style="left:298px;top:519.500px" width="13" height="14" viewBox="0 0 13 14"><path d="M6.500 .5L12.300 2.600V6.800C12.300 10 9.800 12.400 6.500 13.500C3.200 12.400 .7 10 .7 6.800V2.600Z" fill="#c9c9c9"/><path d="M6.500 2.300V7H2.400V3.700Z" fill="#1a1a1a"/><path d="M6.500 7H10.600C10.400 9.200 8.700 10.800 6.500 11.700Z" fill="#1a1a1a"/></svg>
<div class="tb" style="left:303.600px">Security</div>
<svg class="abs" style="left:365px;top:519.500px" width="18" height="13" viewBox="0 0 18 13"><circle cx="5.200" cy="3.300" r="2.700" fill="#c4c4c4"/><path d="M.6 12.300C.6 8.200 2.600 6.800 5.200 6.800C7.800 6.800 9.800 8.200 9.800 12.300Z" fill="#c4c4c4"/><circle cx="12.300" cy="4" r="2.300" fill="#c4c4c4"/><path d="M10.800 12.300C10.800 10 10.200 8.500 9.400 7.700C10.200 7.200 11.200 7 12.300 7C14.700 7 16.600 8.400 16.600 12.300Z" fill="#c4c4c4"/></svg>
<div class="abs" style="left:385.300px;top:519.200px;font-family:'Liberation Serif',serif;font-size:8.800px;line-height:10px;color:#c8c8c8">116</div>
<svg class="abs" style="left:405.400px;top:522.800px" width="7" height="5" viewBox="0 0 7 5"><path d="M.8 4L3.500 1.300L6.200 4" fill="none" stroke="#bdbdbd" stroke-width="1.100"/></svg>
<div class="tb" style="left:374px">Participants</div>
<svg class="abs" style="left:437px;top:519.700px" width="15" height="13" viewBox="0 0 15 13"><path d="M2.500 .5H12.500C13.600 .5 14.400 1.300 14.400 2.400V7.400C14.400 8.500 13.600 9.300 12.500 9.300H6.200L3 12.200V9.300H2.500C1.400 9.300 .6 8.500 .6 7.400V2.400C.6 1.300 1.400 .5 2.500 .5Z" fill="#c9c9c9"/></svg>
<div class="tb" style="left:444.200px">Chat</div>
<svg class="abs" style="left:495px;top:519.800px" width="17" height="13" viewBox="0 0 17 13"><rect x=".3" y=".3" width="16.400" height="12.200" rx="2" fill="#23d15f"/><path d="M8.500 9.800V4M6.200 6L8.500 3.600L10.800 6" fill="none" stroke="#0b3a1c" stroke-width="1.200"/></svg>
<svg class="abs" style="left:524.100px;top:522.800px" width="7" height="5" viewBox="0 0 7 5"><path d="M.8 4L3.500 1.300L6.200 4" fill="none" stroke="#bdbdbd" stroke-width="1.100"/></svg>
<div class="tb" style="left:503.800px;color:#27c45c">Share Screen</div>
<svg class="abs" style="left:567px;top:518px" width="31" height="14" viewBox="0 0 31 14"><rect x=".5" y=".2" width="12.700" height="13" rx="1.200" fill="#c6c6c6"/><rect x="4.300" y="3.700" width="1.700" height="6" fill="#1a1a1a"/><rect x="7.700" y="3.700" width="1.700" height="6" fill="#1a1a1a"/><rect x="16.900" y=".2" width="13.100" height="13" rx="1.200" fill="#c6c6c6"/><rect x="21" y="4.200" width="5" height="5" fill="#1a1a1a"/></svg>
<div class="tb" style="left:582px">Pause/Stop Recording</div>
<svg class="abs" style="left:655.500px;top:518.500px" width="15" height="14" viewBox="0 0 15 14"><g fill="#c6c6c6"><rect x=".3" y=".3" width="6.400" height="6" rx=".8"/><rect x="8" y=".3" width="6.400" height="6" rx=".8"/><rect x=".3" y="7.600" width="6.400" height="6" rx=".8"/><rect x="8" y="7.600" width="6.400" height="6" rx=".8"/></g></svg>
<div class="tb" style="left:663.300px">Breakout Rooms</div>
<svg class="abs" style="left:718px;top:517.500px" width="16" height="15" viewBox="0 0 16 15"><circle cx="6.600" cy="8.500" r="5.700" fill="#c6c6c6"/><circle cx="4.700" cy="7.400" r=".9" fill="#1a1a1a"/><circle cx="8.500" cy="7.400" r=".9" fill="#1a1a1a"/><path d="M3.800 9.800C4.600 12.200 8.600 12.200 9.400 9.800Z" fill="#1a1a1a"/><path d="M13.200 .6V4.600M11.200 2.600H15.200" stroke="#c6c6c6" stroke-width="1"/></svg>
<div class="tb" style="left:724.500px">Reactions</div>
<svg class="abs" style="left:772px;top:519.500px" width="13" height="13" viewBox="0 0 13 13"><path d="M1 4.500V2.800C1 1.800 1.800 1 2.800 1H5M1 8.200V10.200C1 11.200 1.800 12 2.800 12H5M12 8V10.200C12 11.200 11.200 12 10.200 12H8" fill="none" stroke="#c6c6c6" stroke-width="1.300"/><circle cx="10" cy="2.900" r="1.700" fill="none" stroke="#c6c6c6" stroke-width="1.200"/><circle cx="3.600" cy="8.800" r="1.300" fill="#c6c6c6"/></svg>
<div class="tb" style="left:778.200px">Apps</div>
<div class="abs" style="left:975px;top:522.800px;width:41.300px;height:18px;background:#c8282d;border-radius:3.500px;color:#fff;font-weight:700;font-size:7.500px;line-height:18px;text-align:center">Leave</div>
<!-- taskbar -->
<div id="taskbar">
  <svg class="abs" style="left:10.400px;top:8.500px" width="11" height="11" viewBox="0 0 11 11"><path d="M0 1.500L4.700 .8V5.200H0ZM5.300 .7L11 0V5.200H5.300ZM0 5.800H4.700V10.200L0 9.500ZM5.300 5.800H11V11L5.300 10.300Z" fill="#1b1b1b"/></svg>
  <div class="abs" style="left:32.800px;top:1px;width:228.500px;height:24.700px;background:#fff;border:1px solid #d9d9d9;border-top-color:#e4e4e4"></div>
  <svg class="abs" style="left:39.500px;top:7.500px" width="12" height="12" viewBox="0 0 12 12"><circle cx="7.300" cy="4.700" r="3.600" fill="none" stroke="#333" stroke-width="1.100"/><path d="M4.700 7.300L.8 11.200" stroke="#333" stroke-width="1.200"/></svg>
  <div class="abs" style="left:58.700px;top:7.200px;font-size:10px;line-height:13px;color:#4a4a4a;white-space:nowrap">Type here to search</div>
  <svg class="abs" style="left:271px;top:7px" width="13" height="13" viewBox="0 0 13 13"><circle cx="6.300" cy="7" r="4.400" fill="none" stroke="#222" stroke-width="1.500"/></svg>
  <svg class="abs" style="left:303.500px;top:8.500px" width="13" height="11" viewBox="0 0 13 11"><path d="M2.700 2.200H9.300V8.800H2.700Z" fill="none" stroke="#333" stroke-width="1"/><path d="M.6 .5V3M.6 4.500V6.500M.6 8V10.500M11.600 .5V3M11.600 4.500V6.500M11.600 8V10.500" stroke="#333" stroke-width="1"/></svg>
  <div class="abs" style="left:330.500px;top:24.500px;width:26.500px;height:2.500px;background:#2f7fd8"></div>
  <svg class="abs" style="left:336.500px;top:6px" width="16" height="17" viewBox="0 0 16 17"><circle cx="5.300" cy="5.500" r="4.600" fill="#3ec456"/><circle cx="8.300" cy="8.600" r="4.200" fill="#2fae49"/><path d="M1.300 10.800L2 8.300L4 10Z" fill="#3ec456"/><circle cx="10.700" cy="11.500" r="4.200" fill="#e8262a"/><path d="M10.300 9.400L11.200 9V14" stroke="#fff" stroke-width="1.100" fill="none"/></svg>
  <div class="abs" style="left:363.500px;top:24.500px;width:26.500px;height:2.500px;background:#2f7fd8"></div>
  <svg class="abs" style="left:368.500px;top:5.500px" width="17" height="17" viewBox="0 0 17 17"><circle cx="8.500" cy="8.500" r="8" fill="#1f86d6"/><path d="M1 9C1.500 4 5 1 9 1C13 1 16.400 3.800 16.400 7.500C16.400 10 14.500 11.300 12.500 11.300C10.800 11.300 9.800 10.500 10.500 9.500C11.200 8.300 10 6.200 7.300 6.200C4.400 6.200 1.800 8 1 9Z" fill="#37c4d6"/><path d="M3.300 10.500C3.300 7.800 5.300 6.300 7.300 6.300C5.800 7.600 5.700 10.600 7.800 12.400C9.600 13.900 12.600 13.700 14.400 12.200C13.300 14.700 11 16.400 8.200 16.400C5.300 16.400 3.300 13.800 3.300 10.500Z" fill="#155fae"/><path d="M6.700 10C6.700 8.700 7.600 7.800 8.800 7.800C9.800 7.800 10.400 8.500 10.300 9.400C10.200 10.400 10.800 11.300 12.300 11.300C11.300 12.200 9.800 12.400 8.600 12C7.500 11.700 6.700 11 6.700 10Z" fill="#eef6fb"/></svg>
  <svg class="abs" style="left:402px;top:7px" width="16" height="14" viewBox="0 0 16 14"><path d="M.5 1.500H5.500L6.800 3H15.500V13.500H.5Z" fill="#e8a33a"/><path d="M.5 4.200H15.500V13.500H.5Z" fill="#f8cf5c"/><path d="M3.500 8.500H12.500V13.500H3.500Z" fill="#4f9fdc"/><path d="M5.500 10.800H10.500V13.500H5.500Z" fill="#f3f0e4"/></svg>
  <div class="abs" style="left:429.500px;top:24.500px;width:27px;height:2.500px;background:#2f7fd8"></div>
  <svg class="abs" style="left:435px;top:6.600px" width="15" height="15" viewBox="0 0 15 15"><rect x=".3" y=".3" width="14.400" height="14.400" rx="1.300" fill="#0b2a3c" stroke="#2b9fd8" stroke-width=".7"/><text x="2.500" y="10.800" font-family="Liberation Sans" font-weight="700" font-size="8" fill="#8fd1f6">Ps</text></svg>
  <div class="abs" style="left:460.400px;top:0;width:30.200px;height:27px;background:#f9f9f9"></div>
  <div class="abs" style="left:460.400px;top:24.500px;width:30.200px;height:2.500px;background:#2f7fd8"></div>
  <svg class="abs" style="left:468.300px;top:7.200px" width="15" height="14" viewBox="0 0 15 14"><rect width="15" height="14" rx="3.600" fill="#4a8cf2"/><rect x="2.700" y="4.300" width="6.500" height="5.400" rx="1.200" fill="#fff"/><path d="M9.900 6.300L12.400 4.600V9.400L9.900 7.700Z" fill="#fff"/></svg>
  <!-- tray -->
  <svg class="abs" style="left:742px;top:7.500px" width="15" height="13" viewBox="0 0 15 13"><circle cx="5" cy="4.500" r="3.200" fill="#f7c64a"/><path d="M4.800 11.800C3 11.800 2 10.700 2 9.400C2 8.100 3 7.100 4.300 7.100C4.800 5.400 6.300 4.400 8 4.400C10 4.400 11.500 5.700 11.800 7.500C13.200 7.600 14.200 8.500 14.200 9.700C14.200 10.900 13.200 11.800 11.900 11.800Z" fill="#cfe0f2" stroke="#a9c4e2" stroke-width=".5"/></svg>
  <div class="abs" style="left:763.700px;top:8.200px;font-size:9.300px;line-height:12px;color:#2b2b2b;white-space:pre;letter-spacing:-.15px">27°C  Berawan</div>
  <svg class="abs" style="left:835px;top:10px" width="10" height="7" viewBox="0 0 10 7"><path d="M.8 5.800L5 1.500L9.200 5.800" fill="none" stroke="#333" stroke-width="1"/></svg>
  <svg class="abs" style="left:852.500px;top:8px" width="9" height="11" viewBox="0 0 9 11"><path d="M1 .8H6" stroke="#333" stroke-width=".9"/><rect x="1" y="2.600" width="5" height="6.600" rx="1" fill="none" stroke="#333" stroke-width=".9"/><path d="M6.300 5L8.300 4V7.600L6.300 6.600Z" fill="#333"/><path d="M2.300 10.500H5" stroke="#333" stroke-width=".8"/></svg>
  <svg class="abs" style="left:866px;top:9px" width="13" height="9" viewBox="0 0 13 9"><path d="M3 8.300C1.500 8.300 .6 7.300 .6 6.100C.6 4.900 1.500 4 2.700 3.900C3 2 4.600.7 6.500.7C8.300.7 9.800 1.800 10.300 3.500C11.500 3.700 12.400 4.700 12.400 5.900C12.400 7.200 11.300 8.300 10 8.300Z" fill="#6e6e6e" stroke="#333" stroke-width=".8"/></svg>
  <svg class="abs" style="left:883.500px;top:7.500px" width="8" height="12" viewBox="0 0 8 12"><rect x="2" y=".3" width="4" height="7" rx="2" fill="#222"/><path d="M.7 5.500C.7 10 7.300 10 7.300 5.500" fill="none" stroke="#222" stroke-width=".9"/><path d="M4 9V11M2.300 11.300H5.700" stroke="#222" stroke-width=".9"/></svg>
  <svg class="abs" style="left:898.500px;top:10.500px" width="12" height="7" viewBox="0 0 12 7"><rect x=".5" y=".5" width="9.600" height="5.600" fill="#fff" stroke="#222" stroke-width=".9"/><rect x="1" y="1" width="5.500" height="4.600" fill="#222"/><rect x="10.500" y="2" width="1.100" height="2.600" fill="#222"/></svg>
  <svg class="abs" style="left:915.500px;top:8.500px" width="10" height="10" viewBox="0 0 10 10"><g fill="none" stroke="#8a8a8a" stroke-width="1"><path d="M1 9.300C1 4.700 4.700 1 9.300 1"/><path d="M3.600 9.300C3.600 6.100 6.100 3.600 9.300 3.600"/><path d="M6.200 9.300C6.200 7.600 7.600 6.200 9.300 6.200"/></g><circle cx="8.600" cy="8.700" r=".9" fill="#8a8a8a"/></svg>
  <svg class="abs" style="left:929.500px;top:8px" width="13" height="11" viewBox="0 0 13 11"><path d="M.8 3.800H2.800L5.500 1.300V9.700L2.800 7.200H.8Z" fill="none" stroke="#333" stroke-width=".9"/><path d="M7.200 3.800C8 4.800 8 6.200 7.200 7.200M8.900 2.500C10.400 4.300 10.400 6.700 8.900 8.500M10.600 1.200C12.700 3.700 12.700 7.300 10.600 9.800" fill="none" stroke="#333" stroke-width=".8"/></svg>
  <div class="abs" style="left:951.500px;top:3.500px;font-size:8px;line-height:10px;color:#333;white-space:nowrap">9:46 AM</div>
  <div class="abs" style="left:948.500px;top:15.800px;font-size:8px;line-height:10px;color:#333;white-space:nowrap">8/15/2021</div>
  <svg class="abs" style="left:996.500px;top:8px" width="17" height="17" viewBox="0 0 17 17"><path d="M.5 .5H11.500V8.500H4L.5 11Z" fill="#1e1e1e"/><path d="M2.300 2.600H9.700M2.300 4.600H9.700" stroke="#888" stroke-width=".7"/><circle cx="11" cy="11.300" r="4.800" fill="#d9d9d9" stroke="#9a9a9a" stroke-width=".6"/><text x="8.900" y="14.200" font-family="Liberation Sans" font-size="7.500" fill="#333">3</text></svg>
  <div class="abs" style="left:1021px;top:0;width:1px;height:27px;background:#bcbcbc"></div>
</div>
</body></html>
